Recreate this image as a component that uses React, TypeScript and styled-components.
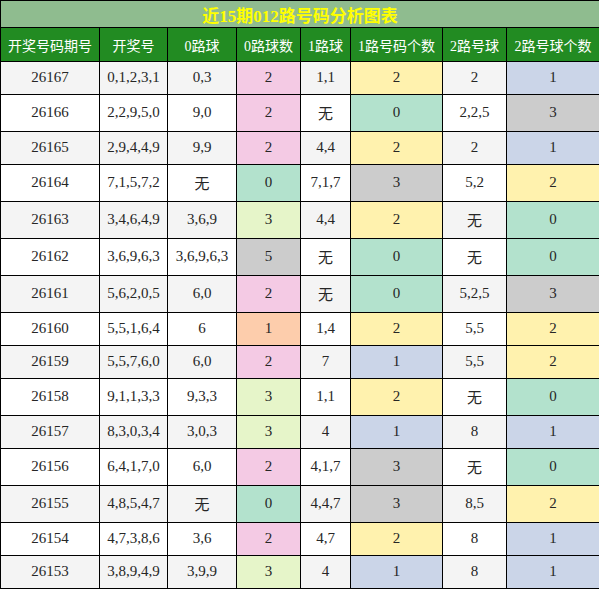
import { createGlobalStyle } from 'styled-components'
import styled from 'styled-components'

type Row = [string, string, string, number, string, number, string, number]

const ROWS: Row[] = [
  ['26167', '0,1,2,3,1', '0,3', 2, '1,1', 2, '2', 1],
  ['26166', '2,2,9,5,0', '9,0', 2, '无', 0, '2,2,5', 3],
  ['26165', '2,9,4,4,9', '9,9', 2, '4,4', 2, '2', 1],
  ['26164', '7,1,5,7,2', '无', 0, '7,1,7', 3, '5,2', 2],
  ['26163', '3,4,6,4,9', '3,6,9', 3, '4,4', 2, '无', 0],
  ['26162', '3,6,9,6,3', '3,6,9,6,3', 5, '无', 0, '无', 0],
  ['26161', '5,6,2,0,5', '6,0', 2, '无', 0, '5,2,5', 3],
  ['26160', '5,5,1,6,4', '6', 1, '1,4', 2, '5,5', 2],
  ['26159', '5,5,7,6,0', '6,0', 2, '7', 1, '5,5', 2],
  ['26158', '9,1,1,3,3', '9,3,3', 3, '1,1', 2, '无', 0],
  ['26157', '8,3,0,3,4', '3,0,3', 3, '4', 1, '8', 1],
  ['26156', '6,4,1,7,0', '6,0', 2, '4,1,7', 3, '无', 0],
  ['26155', '4,8,5,4,7', '无', 0, '4,4,7', 3, '8,5', 2],
  ['26154', '4,7,3,8,6', '3,6', 2, '4,7', 2, '8', 1],
  ['26153', '3,8,9,4,9', '3,9,9', 3, '4', 1, '8', 1],
]

const HEADERS = ['开奖号码期号', '开奖号', '0路球', '0路球数', '1路球', '1路号码个数', '2路号球', '2路号球个数']
const WIDTHS = [99, 68, 69, 64, 50, 92, 64, 93]

// pastel colours per count column
const ZERO_COLORS: Record<number, string> = {
  0: '#b3e2cd',
  1: '#fdcdac',
  2: '#f4cae4',
  3: '#e6f5c9',
  5: '#cccccc',
}
const ROUTE_COLORS: Record<number, string> = {
  0: '#b3e2cd',
  1: '#cbd5e8',
  2: '#fff2ae',
  3: '#cccccc',
}

const GlobalStyle = createGlobalStyle`
  body {
    margin: 0;
    background: #ffffff;
  }
`

const Table = styled.table`
  width: 599px;
  table-layout: fixed;
  border-collapse: collapse;
  font-family: 'Liberation Serif', 'Noto Sans CJK SC', serif;
  font-size: 15px;
  color: #262626;
`

const TitleCell = styled.th`
  height: 26px;
  padding: 0;
  border: 1px solid #000;
  background-color: #8fbc8f;
  color: #ffff00;
  font-size: 17px;
  font-weight: 700;
  text-align: center;
`

const HeadCell = styled.th`
  height: 33px;
  padding: 0;
  border: 1px solid #000;
  background-color: #228b22;
  color: #ffffff;
  font-size: 14px;
  font-weight: 400;
  text-align: center;
  white-space: nowrap;
`

const Cell = styled.td<{ $bg?: string; $alt: boolean }>`
  padding: 7px 0 8px;
  border: 1px solid #000;
  text-align: center;
  white-space: nowrap;
  background-color: ${(p) => p.$bg || (p.$alt ? '#f4f4f4' : '#ffffff')};
`

export default function App() {
  return (
    <>
      <GlobalStyle />
      <Table>
        <colgroup>
          {WIDTHS.map((w, i) => (
            <col key={i} style={{ width: w }} />
          ))}
        </colgroup>
        <thead>
          <tr>
            <TitleCell colSpan={8}>近15期012路号码分析图表</TitleCell>
          </tr>
          <tr>
            {HEADERS.map((h) => (
              <HeadCell key={h}>{h}</HeadCell>
            ))}
          </tr>
        </thead>
        <tbody>
          {ROWS.map((r, i) => {
            const alt = i % 2 === 0
            return (
              <tr key={r[0]}>
                <Cell $alt={alt}>{r[0]}</Cell>
                <Cell $alt={alt}>{r[1]}</Cell>
                <Cell $alt={alt}>{r[2]}</Cell>
                <Cell $alt={alt} $bg={ZERO_COLORS[r[3]]}>{r[3]}</Cell>
                <Cell $alt={alt}>{r[4]}</Cell>
                <Cell $alt={alt} $bg={ROUTE_COLORS[r[5]]}>{r[5]}</Cell>
                <Cell $alt={alt}>{r[6]}</Cell>
                <Cell $alt={alt} $bg={ROUTE_COLORS[r[7]]}>{r[7]}</Cell>
              </tr>
            )
          })}
        </tbody>
      </Table>
    </>
  )
}
